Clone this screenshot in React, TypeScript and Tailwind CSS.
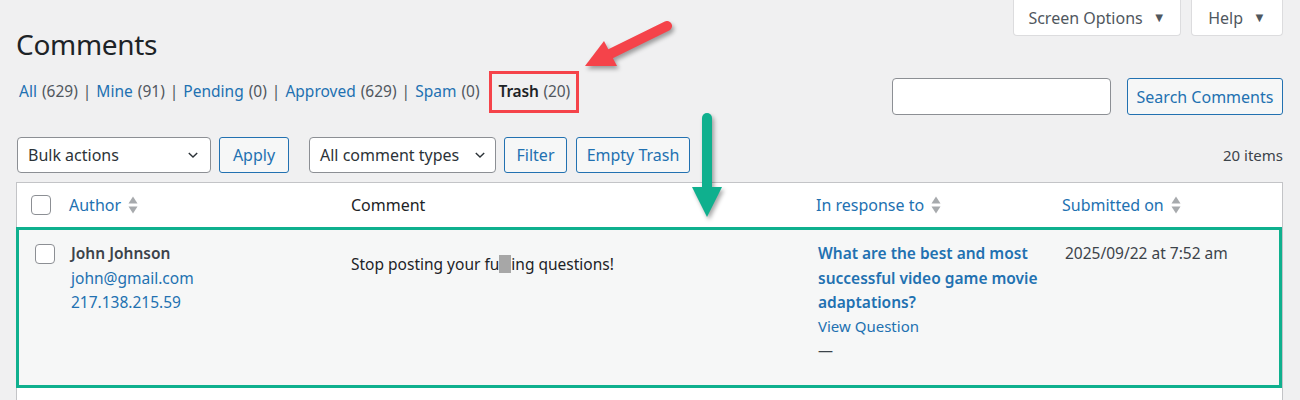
import React from "react";

const font = { fontFamily: '"Noto Sans", "Open Sans", sans-serif' };

function Chevron() {
  return (
    <svg width="14" height="14" viewBox="0 0 20 20" className="shrink-0">
      <path d="M4 7l6 6 6-6" fill="none" stroke="#2c3338" strokeWidth="2" />
    </svg>
  );
}

function Sort() {
  return (
    <svg width="10" height="20" viewBox="0 0 10 20" className="ml-[7px] inline-block">
      <path d="M5 1.5l4.5 7H0.5z" fill="#a7aaad" />
      <path d="M5 18.5l4.5-7H0.5z" fill="#a7aaad" />
    </svg>
  );
}

function Checkbox() {
  return <div className="h-[20px] w-[20px] rounded-[4px] border border-[#8c8f94] bg-white" />;
}

function Btn({ children, className = "" }: { children: React.ReactNode; className?: string }) {
  return (
    <div
      className={`flex h-[36px] items-center justify-center rounded-[3px] border border-[#2271b1] bg-[#f6f7f7] text-[16px] text-[#2271b1] ${className}`}
    >
      {children}
    </div>
  );
}

export default function App() {
  const links: [string, string][] = [
    ["All", "(629)"],
    ["Mine", "(91)"],
    ["Pending", "(0)"],
    ["Approved", "(629)"],
    ["Spam", "(0)"],
  ];
  return (
    <div className="relative h-[400px] w-[1300px] overflow-hidden bg-[#f0f0f1]" style={font}>
      {/* screen options */}
      <div className="flex justify-end gap-[10px] pr-[17px]">
        <div className="flex h-[36px] w-[168px] items-center justify-center gap-[10px] rounded-b-[4px] border border-t-0 border-[#dcdcde] bg-white text-[16px] text-[#50575e]">
          Screen Options <span className="text-[13px]">▼</span>
        </div>
        <div className="flex h-[36px] w-[92px] items-center justify-center gap-[10px] rounded-b-[4px] border border-t-0 border-[#dcdcde] bg-white text-[16px] text-[#50575e]">
          Help <span className="text-[13px]">▼</span>
        </div>
      </div>

      <div className="pl-[16px] pr-[17px]">
        <h1 className="-mt-[10px] text-[28px] leading-[36px] tracking-[-0.3px] text-[#1d2327]">Comments</h1>

        <div className="mt-[9px] flex items-start justify-between">
          <div className="flex items-center pl-[3px] text-[15.5px] text-[#50575e]">
            {links.map(([l, n], i) => (
              <React.Fragment key={l}>
                <span className="text-[#2271b1]">{l}</span>
                <span className="ml-[5px]">{n}</span>
                {i < links.length - 1 ? <span className="mx-[5px]">|</span> : null}
              </React.Fragment>
            ))}
            <div className="ml-[9px] flex h-[42px] items-center border-[3px] border-[#f5434a] pl-[7px] pr-[6px] tracking-[-0.2px]">
              <span className="font-semibold text-[#1d2327]">Trash</span>
              <span className="ml-[5px]">(20)</span>
            </div>
          </div>
          <div className="mt-[7px] flex items-center gap-[16px]">
            <div className="h-[37px] w-[219px] rounded-[4px] border border-[#8c8f94] bg-white" />
            <Btn className="h-[37px] w-[156px]">Search Comments</Btn>
          </div>
        </div>

        <div className="mt-[22px] flex items-center justify-between">
          <div className="flex items-center pl-[1px]">
            <div className="flex h-[36px] w-[194px] items-center justify-between rounded-[4px] border border-[#8c8f94] bg-white pl-[10px] pr-[10px] text-[16px] text-[#2c3338]">
              Bulk actions <Chevron />
            </div>
            <Btn className="ml-[8px] w-[70px]">Apply</Btn>
            <div className="ml-[20px] flex h-[36px] w-[187px] items-center justify-between rounded-[4px] border border-[#8c8f94] bg-white pl-[10px] pr-[8px] text-[16px] text-[#2c3338]">
              All comment types <Chevron />
            </div>
            <Btn className="ml-[8px] w-[63px]">Filter</Btn>
            <Btn className="ml-[9px] w-[114px]">Empty Trash</Btn>
          </div>
          <div className="text-[15px] text-[#3c434a]">20 items</div>
        </div>

        {/* table */}
        <div className="mt-[9px] h-[300px] border border-[#c3c4c7] bg-white">
          <div className="grid h-[45px] grid-cols-[41px_282px_465px_246px_1fr] items-center border-b border-[#c3c4c7] text-[16px]">
            <div className="flex justify-end pr-[7px]">
              <Checkbox />
            </div>
            <div className="flex items-center pl-[11px] text-[#2271b1]">
              Author <Sort />
            </div>
            <div className="pl-[11px] text-[#1d2327]">Comment</div>
            <div className="flex items-center pl-[11px] text-[#2271b1]">
              In response to <Sort />
            </div>
            <div className="flex items-center pl-[11px] text-[#2271b1]">
              Submitted on <Sort />
            </div>
          </div>
          <div className="-ml-px -mt-px grid h-[161px] grid-cols-[41px_282px_465px_246px_1fr] border-[3px] border-[#0fb08e] bg-[#f6f7f7] pt-[11px] text-[15.5px] leading-[24.5px] text-[#3c434a]">
            <div className="flex justify-end pr-[5px] pt-[3px]">
              <div className="h-[20px] w-[20px]">
                <Checkbox />
              </div>
            </div>
            <div className="pl-[11px]">
              <div className="font-semibold">John Johnson</div>
              <div className="text-[#2271b1]">john@gmail.com</div>
              <div className="text-[#2271b1]">217.138.215.59</div>
            </div>
            <div className="pl-[9px] pt-[11px] text-[#1d2327]">
              Stop posting your fu
              <span className="inline-block h-[18px] w-[12px] translate-y-[3px] bg-[#a7a7a7]" />
              ing questions!
            </div>
            <div className="pl-[11px] pr-[8px]">
              <div className="font-semibold text-[#2271b1]">What are the best and most successful video game movie adaptations?</div>
              <div className="text-[15px] leading-[22px] text-[#2271b1]">View Question</div>
              <div className="text-[15px] leading-[26px] text-[#3c434a]">—</div>
            </div>
            <div className="pl-[12px]">2025/09/22 at 7:52 am</div>
          </div>
        </div>
      </div>

      {/* red arrow */}
      <svg className="pointer-events-none absolute left-0 top-0" width="1300" height="400" style={{ filter: "drop-shadow(2px 3px 2px rgba(0,0,0,0.35))" }}>
        <line x1="667" y1="26" x2="608" y2="55" stroke="#f5434a" strokeWidth="10" strokeLinecap="round" />
        <polygon points="585,66 604,41 617,66" fill="#f5434a" />
      </svg>
      {/* green arrow */}
      <svg className="pointer-events-none absolute left-0 top-0" width="1300" height="400" style={{ filter: "drop-shadow(2px 3px 2px rgba(0,0,0,0.35))" }}>
        <line x1="707" y1="118" x2="707" y2="190" stroke="#0fb08e" strokeWidth="10" strokeLinecap="round" />
        <polygon points="692,187 722,187 707,217" fill="#0fb08e" />
      </svg>
    </div>
  );
}
